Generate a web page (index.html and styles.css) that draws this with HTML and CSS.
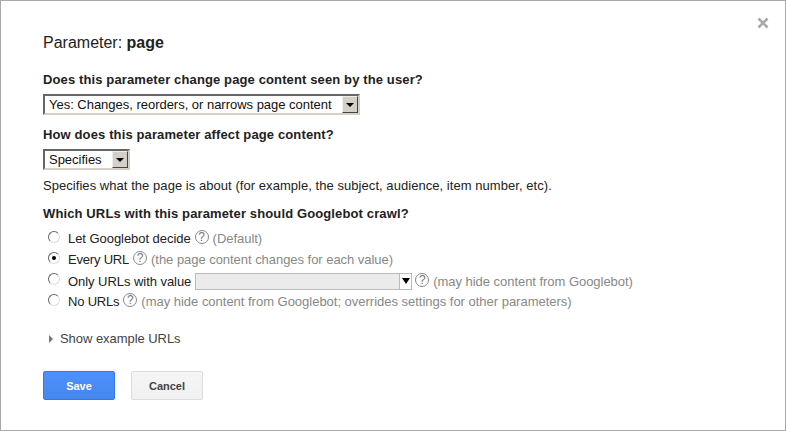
FILE: index.html
```html
<!DOCTYPE html>
<html lang="en">
<head>
    <meta charset="UTF-8">
    <title>Parameter: page</title>
    <link rel="stylesheet" href="styles.css">
</head>
<body>
    <div class="dialog">
        <div class="close-row">
            <svg class="close" width="12" height="12" viewBox="0 0 12 12"><path d="M1.5 1.5 10.5 10.5M10.5 1.5 1.5 10.5" stroke="#a9a9a9" stroke-width="2.6" fill="none"/></svg>
        </div>

        <h2 class="title">Parameter: <b>page</b></h2>

        <div class="question q1">Does this parameter change page content seen by the user?</div>
        <div class="select select-wide">
            <span class="select-text">Yes: Changes, reorders, or narrows page content</span>
            <span class="select-btn"><i class="arrow"></i></span>
        </div>

        <div class="question q2">How does this parameter affect page content?</div>
        <div class="select select-small">
            <span class="select-text">Specifies</span>
            <span class="select-btn"><i class="arrow"></i></span>
        </div>
        <div class="hint">Specifies what the page is about (for example, the subject, audience, item number, etc).</div>

        <div class="question q3">Which URLs with this parameter should Googlebot crawl?</div>
        <div class="options">
            <label class="option">
                <span class="radio"></span>
                <span>Let Googlebot decide</span>
                <span class="help">?</span>
                <span class="note">(Default)</span>
            </label>
            <label class="option">
                <span class="radio checked"></span>
                <span class="tight">Every URL</span>
                <span class="help">?</span>
                <span class="note">(the page content changes for each value)</span>
            </label>
            <label class="option option-combo">
                <span class="radio"></span>
                <span>Only URLs with value</span>
                <span class="combo"><span class="combo-btn"><i class="arrow arrow-big"></i></span></span>
                <span class="help help-after-combo">?</span>
                <span class="note">(may hide content from Googlebot)</span>
            </label>
            <label class="option option-last">
                <span class="radio"></span>
                <span class="tight">No URLs</span>
                <span class="help">?</span>
                <span class="note note-long">(may hide content from Googlebot; overrides settings for other parameters)</span>
            </label>
        </div>

        <div class="examples"><i class="caret"></i>Show example URLs</div>

        <div class="buttons">
            <button class="btn btn-save">Save</button>
            <button class="btn btn-cancel">Cancel</button>
        </div>
    </div>
</body>
</html>
```

FILE: styles.css
```css
* {
    box-sizing: border-box;
}

html, body {
    margin: 0;
    height: 100%;
    background-color: white;
}

body {
    font-family: "Liberation Sans", Arial, sans-serif;
    font-size: 13px;
    color: #222;
    overflow: hidden;
}

.dialog {
    height: 431px;
    border: 1px solid #aaa;
    padding: 0 42px;
    position: relative;
}

.close {
    position: absolute;
    top: 16px;
    right: 16px;
}

.title {
    margin: 32px 0 0;
    font-size: 16px;
    line-height: 20px;
    font-weight: normal;
    color: #222;
}

.question {
    font-weight: bold;
    line-height: 16px;
    letter-spacing: .125px;
}

.q1 {
    margin-top: 19px;
}

.q2 {
    margin-top: 12px;
}

.q3 {
    margin-top: 12px;
}

.select {
    display: flex;
    align-items: stretch;
    height: 21px;
    margin-top: 6px;
    background-color: white;
    border: 2px solid;
    border-color: #666 #d4d0c8 #d4d0c8 #666;
}

.select-wide {
    width: 317px;
}

.select-small {
    width: 87px;
}

.select-text {
    flex: 1;
    padding-left: 4px;
    line-height: 17px;
    letter-spacing: -.02px;
    color: #111;
}

.select-btn {
    width: 16px;
    display: flex;
    align-items: center;
    justify-content: center;
    background-color: #d4d0c8;
    border: 1px solid;
    border-color: #eee #444 #444 #eee;
}

.arrow {
    width: 0;
    height: 0;
    border: 4px solid transparent;
    border-top-color: black;
    border-bottom-width: 0;
}

.hint {
    margin-top: 8px;
    line-height: 16px;
    letter-spacing: .05px;
}

.options {
    margin-top: 6px;
    padding-left: 5px;
}

.option {
    display: flex;
    align-items: center;
    height: 21px;
    color: #222;
    letter-spacing: -.05px;
}

.option-combo {
    height: 22px;
}

.option-last {
    height: 19px;
}

.tight {
    letter-spacing: -.2px;
}

.radio {
    width: 12px;
    height: 12px;
    margin: -4px 8px 0 0;
    border-radius: 50%;
    border: 1px solid;
    border-color: #666 #ddd #ddd #666;
    background-color: white;
    display: flex;
    align-items: center;
    justify-content: center;
}

.radio.checked::after {
    content: "";
    width: 4px;
    height: 4px;
    border-radius: 50%;
    background-color: black;
}

.help {
    width: 14px;
    height: 14px;
    margin: -3px 4px 0 4px;
    border: 1px solid #888;
    border-radius: 50%;
    color: #777;
    font-size: 12px;
    line-height: 12px;
    text-align: center;
}

.help-after-combo {
    margin-left: 3px;
}

.note {
    color: #888;
    letter-spacing: -.04px;
}

.note-long {
    letter-spacing: -.015px;
}

.combo {
    width: 217px;
    height: 17px;
    margin-left: 4px;
    display: flex;
    justify-content: flex-end;
    background-color: #ebebeb;
    border: 1px solid #bbb;
}

.combo-btn {
    width: 12px;
    display: flex;
    align-items: center;
    justify-content: center;
    background-color: white;
    border-left: 1px solid #bbb;
}

.arrow-big {
    border-width: 6px 4px 0;
}

.examples {
    display: flex;
    align-items: center;
    margin: 20px 0 0 6px;
    line-height: 16px;
    letter-spacing: -.05px;
    color: #444;
}

.caret {
    width: 0;
    height: 0;
    margin-right: 7px;
    border: 4px solid transparent;
    border-left-color: #777;
    border-right-width: 0;
}

.buttons {
    display: flex;
    gap: 16px;
    margin-top: 24px;
}

.btn {
    width: 72px;
    height: 29px;
    padding: 0;
    border-radius: 2px;
    font-family: inherit;
    font-size: 11px;
    font-weight: bold;
}

.btn-save {
    color: white;
    background: linear-gradient(#4d90fe, #4787ed);
    border: 1px solid #3079ed;
}

.btn-cancel {
    color: #444;
    background: linear-gradient(#f5f5f5, #f1f1f1);
    border: 1px solid #dcdcdc;
}
```
